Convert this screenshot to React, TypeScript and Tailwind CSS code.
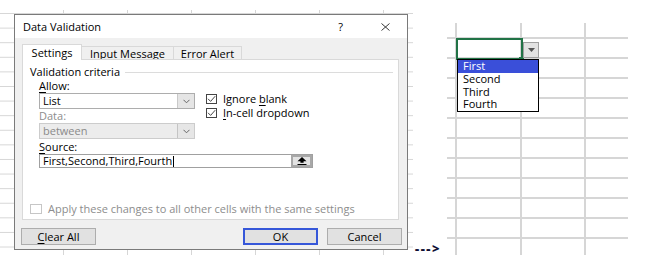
import type { ReactNode } from 'react'

const rowsH = [16, 20, 20, 20, 20, 20, 20, 20, 20, 20, 20, 16]
const colsW = [10, 65, 64, 42]

function U({ children }: { children: ReactNode }) {
  return <span className="underline decoration-1 underline-offset-[1.5px]">{children}</span>
}

function Chevron() {
  return (
    <svg width="7" height="5" viewBox="0 0 7 5">
      <path d="M0.5 0.8 L3.5 3.8 L6.5 0.8" fill="none" stroke="#666" strokeWidth="1" />
    </svg>
  )
}

function Combo({ value, disabled }: { value: string; disabled?: boolean }) {
  return (
    <div
      className={`flex h-[16px] w-[156px] border ${
        disabled ? 'border-[#cccccc] bg-[#ececec] text-[#8a8a8a]' : 'border-[#adadad] bg-white text-black'
      }`}
    >
      <div className="flex-1 pl-[3px] leading-[14px]">{value}</div>
      <div
        className={`flex w-[17px] items-center justify-center border-l ${
          disabled ? 'border-[#c4c4c4] bg-[#e6e6e6]' : 'border-[#c9c9c9] bg-[#e5e5e5]'
        }`}
      >
        <Chevron />
      </div>
    </div>
  )
}

function CheckBox({ label }: { label: ReactNode }) {
  return (
    <div className="flex h-[14px] items-center gap-[6px]">
      <div className="flex h-[10px] w-[11px] items-center justify-center border border-[#444] bg-white">
        <svg width="9" height="8" viewBox="0 0 9 8">
          <path d="M1 3.8 L3.6 6.4 L8.2 1.2" fill="none" stroke="#444" strokeWidth="1" />
        </svg>
      </div>
      <span className="leading-[14px]">{label}</span>
    </div>
  )
}

function Btn({ children, primary }: { children: ReactNode; primary?: boolean }) {
  return (
    <div
      className={`flex h-[17px] w-[75px] items-center justify-center bg-[#e1e1e1] leading-[14px] ${
        primary ? 'border-2 border-[#3657d9]' : 'border border-[#adadad]'
      }`}
    >
      {children}
    </div>
  )
}

function Dialog() {
  return (
    <div className="flex h-[236px] w-[394px] flex-col border border-[#7a7a7a] bg-[#f0f0f0]">
      {/* title bar */}
      <div className="flex h-[23px] shrink-0 items-center bg-white pl-[8px]">
        <span className="leading-[14px]">Data Validation</span>
        <span className="ml-auto leading-[14px]">?</span>
        <svg className="ml-[38px] mr-[17px]" width="9" height="8" viewBox="0 0 9 8">
          <path d="M0.5 0.5 L8.5 7.5 M8.5 0.5 L0.5 7.5" stroke="#222" strokeWidth="0.9" />
        </svg>
      </div>

      <div className="flex flex-1 flex-col pl-[7px] pr-[8px] pt-[6px]">
        {/* tabs */}
        <div className="flex h-[16px] items-end">
          <div className="relative z-10 flex h-[16px] w-[60px] items-center justify-center border border-b-0 border-[#d9d9d9] bg-white leading-[14px]">
            Settings
          </div>
          <div className="flex h-[14px] w-[92px] items-center justify-center border border-b-0 border-l-0 border-[#d9d9d9] bg-[#f0f0f0] leading-[14px]">
            Input Message
          </div>
          <div className="flex h-[14px] w-[68px] items-center justify-center border border-b-0 border-l-0 border-[#d9d9d9] bg-[#f0f0f0] leading-[14px]">
            Error Alert
          </div>
        </div>

        {/* panel */}
        <div className="-mt-px flex h-[161px] flex-col border border-[#d9d9d9] bg-white">
          <div className="flex items-center pl-[7px] pr-[5px] pt-[5px] leading-[14px]">
            <span>Validation criteria</span>
            <div className="ml-[5px] h-px flex-1 bg-[#dcdcdc]" />
          </div>

          <div className="flex pl-[16px]">
            <div className="flex w-[156px] flex-col">
              <div className="h-[14px] leading-[14px]">
                <U>A</U>llow:
              </div>
              <Combo value="List" />
              <div className="h-[14px] leading-[14px] text-[#8d8d8d]">Data:</div>
              <Combo value="between" disabled />
            </div>
            <div className="ml-[11px] mt-[13px] flex flex-col">
              <CheckBox label={<>Ignore <U>b</U>lank</>} />
              <CheckBox label={<><U>I</U>n-cell dropdown</>} />
            </div>
          </div>

          <div className="mt-px pl-[16px]">
            <div className="h-[14px] leading-[14px]">
              <U>S</U>ource:
            </div>
            <div className="flex h-[14px] w-[274px] items-center border border-[#a0a0a0] bg-white">
              <span className="pl-[3px] leading-[12px]">First,Second,Third,Fourth</span>
              <span className="ml-px h-[11px] w-px bg-black" />
              <div className="ml-auto flex h-full w-[21px] items-center justify-center border-2 border-[#a8a8a8] bg-[#e3e3e3]">
                <svg width="10" height="8" viewBox="0 0 10 8">
                  <path d="M5 0 L9.5 4.2 L6.6 4.2 L6.6 5.8 L3.4 5.8 L3.4 4.2 L0.5 4.2 Z" fill="#000" />
                  <rect x="0.5" y="7" width="9" height="1" fill="#000" />
                </svg>
              </div>
            </div>
          </div>

          <div className="mb-[3px] mt-auto flex h-[14px] items-center pl-[7px] text-[#8d8d8d]">
            <div className="h-[10px] w-[12px] border border-[#c6c6c6] bg-white" />
            <span className="ml-[6px] leading-[14px]">Apply these changes to all other cells with the same settings</span>
          </div>
        </div>

        {/* buttons */}
        <div className="-ml-px -mr-[3px] mt-[8px] flex">
          <Btn>
            <U>C</U>lear All
          </Btn>
          <div className="ml-auto flex gap-[9px]">
            <Btn primary>OK</Btn>
            <Btn>Cancel</Btn>
          </div>
        </div>
      </div>
    </div>
  )
}

function Sheet() {
  return (
    <div className="relative mt-[23px] grid h-[232px] w-[181px] shrink-0 grid-cols-[10px_65px_64px_42px] grid-rows-[16px_repeat(10,20px)_16px]">
      {rowsH.map((_, r) =>
        colsW.map((__, c) => (
          <div
            key={`${r}-${c}`}
            className={`border-[#d6d6d6] ${c < 3 ? 'border-r-2' : ''} ${r < 11 ? 'border-b-2' : ''}`}
          />
        ))
      )}

      {/* active cell */}
      <div className="absolute left-[9px] top-[15px] h-[22px] w-[67px] border-2 border-[#217346]" />
      <div className="absolute left-[72px] top-[34px] h-[4px] w-[5px] bg-[#217346]" />

      {/* dropdown button */}
      <div className="absolute left-[76px] top-[19px] flex h-[16px] w-[16px] items-center justify-center border border-[#a0a0a0] bg-[#e2e2e2]">
        <svg width="7" height="4" viewBox="0 0 7 4">
          <path d="M0 0 L7 0 L3.5 4 Z" fill="#555" />
        </svg>
      </div>

      {/* dropdown list */}
      <div className="absolute left-[10px] top-[36px] flex h-[53px] w-[82px] flex-col border border-black bg-white leading-[12.75px]">
        <div className="h-[12.75px] bg-[#3a4fd9] pl-[5px] text-white">First</div>
        <div className="h-[12.75px] pl-[5px]">Second</div>
        <div className="h-[12.75px] pl-[5px]">Third</div>
        <div className="h-[12.75px] pl-[5px]">Fourth</div>
      </div>
    </div>
  )
}

export default function App() {
  return (
    <div className="flex h-[268px] w-[650px] overflow-hidden bg-white font-['Open_Sans',sans-serif] text-[11px] text-black">
      <div className="flex w-[447px] shrink-0 items-start">
        <div className="mt-[10px] h-[245px] w-[413px] shrink-0 bg-[linear-gradient(to_left,#d6d6d6_1px,transparent_1px),linear-gradient(to_top,#d6d6d6_1px,transparent_1px)] bg-[size:64px_100%,100%_14.6px] bg-[position:0_0,0_4px] pl-[14px] pt-[4px]">
          <Dialog />
        </div>
        <div className="ml-[2px] mt-[241px] text-[13px] font-extrabold leading-[14px] tracking-[1.5px] text-[#101035]">---&gt;</div>
      </div>
      <Sheet />
    </div>
  )
}
